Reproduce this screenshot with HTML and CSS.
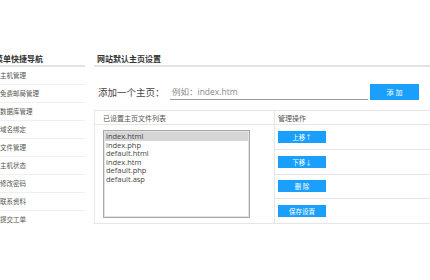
FILE: index.html
```html
<!DOCTYPE html>
<html lang="zh-CN">
<head>
<meta charset="utf-8">
<title>网站默认主页设置</title>
<link rel="stylesheet" href="styles.css">
</head>
<body>
<div class="page">
  <aside class="side">
    <h3 class="side-title">菜单快捷导航</h3>
    <ul class="side-list">
      <li>主机管理</li>
      <li>免费邮局管理</li>
      <li>数据库管理</li>
      <li>域名绑定</li>
      <li>文件管理</li>
      <li>主机状态</li>
      <li>修改密码</li>
      <li>联系资料</li>
      <li class="last">提交工单</li>
    </ul>
  </aside>
  <main class="main">
    <h3 class="main-title">网站默认主页设置</h3>
    <div class="add-row">
      <label class="add-label" for="home">添加一个主页：</label>
      <input class="add-input" id="home" type="text" placeholder="例如：index.htm">
      <button class="btn btn-add" type="button">添 加</button>
    </div>
    <table class="grid">
      <tr>
        <th class="col-list">已设置主页文件列表</th>
        <th class="col-op">管理操作</th>
      </tr>
      <tr>
        <td class="list-cell" rowspan="4">
          <div class="listbox">
            <div class="opt selected">index.html</div>
            <div class="opt">index.php</div>
            <div class="opt">default.html</div>
            <div class="opt">index.htm</div>
            <div class="opt">default.php</div>
            <div class="opt">default.asp</div>
          </div>
        </td>
        <td class="op"><button class="btn btn-op" type="button">上移↑</button></td>
      </tr>
      <tr><td class="op"><button class="btn btn-op" type="button">下移↓</button></td></tr>
      <tr><td class="op"><button class="btn btn-op" type="button">删 除</button></td></tr>
      <tr><td class="op"><button class="btn btn-op" type="button">保存设置</button></td></tr>
    </table>
  </main>
</div>
</body>
</html>
```

FILE: styles.css
```css
html, body {
  margin: 0;
  padding: 0;
  background: #fff;
  overflow: hidden;
}
body {
  font-family: "Open Sans", "Noto Sans CJK SC", sans-serif;
  color: #444;
}
.page {
  display: flex;
  gap: 9px;
  padding-top: 52px;
  margin-left: -5px;
}
.side {
  width: 90px;
  flex: none;
}
.side-title,
.main-title {
  margin: 0;
  height: 13px;
  line-height: 13px;
  font-size: 8px;
  font-weight: bold;
  color: #333;
  border-bottom: 2px solid #e3e3e3;
}
.side-list {
  list-style: none;
  margin: 0;
  padding: 0;
}
.side-list li {
  height: 17px;
  line-height: 17px;
  font-size: 6.5px;
  color: #555;
  padding-left: 5px;
  border-bottom: 1px solid #efefef;
}
.side-list li.last {
  border-bottom: none;
}
.main {
  width: 345px;
  flex: none;
}
.main-title {
  padding-left: 3px;
}
.add-row {
  display: flex;
  align-items: center;
  height: 16px;
  margin-top: 17px;
  padding-left: 4px;
}
.add-label {
  width: 72px;
  flex: none;
  font-size: 9.5px;
  color: #444;
  white-space: nowrap;
}
.add-input {
  width: 198px;
  height: 15px;
  box-sizing: border-box;
  border: none;
  border-bottom: 1px solid #999;
  padding: 0 2px;
  font-family: "Open Sans", "Noto Sans CJK SC", sans-serif;
  font-size: 8.5px;
  color: #444;
  outline: none;
  background: transparent;
}
.add-input::placeholder {
  color: #8a8a8a;
}
.btn {
  border: none;
  background: #1a9ffc;
  color: #fff;
  font-family: "Open Sans", "Noto Sans CJK SC", sans-serif;
  padding: 0;
  cursor: pointer;
}
.btn-add {
  width: 49px;
  height: 16px;
  margin-left: 2px;
  font-size: 7px;
}
.grid {
  margin-top: 10px;
  width: 100%;
  border-collapse: collapse;
  border: 1px solid #e6e6e6;
}
.grid th {
  height: 13px;
  font-size: 7px;
  font-weight: normal;
  color: #555;
  text-align: left;
  border: 1px solid #e6e6e6;
  padding: 0;
}
.grid th.col-list {
  width: 171px;
  padding-left: 8px;
}
.grid th.col-op {
  padding-left: 3px;
}
.list-cell {
  padding: 5px 0 5px 8px;
  vertical-align: top;
  border: 1px solid #e6e6e6;
}
.listbox {
  width: 147px;
  height: 88px;
  box-sizing: border-box;
  border: 1px solid #a9a9a9;
  box-shadow: inset 0 0 0 1px #e2e2e2;
  padding: 1px;
}
.opt {
  height: 8.6px;
  line-height: 8.6px;
  font-size: 7.5px;
  color: #444;
  padding-left: 1px;
  white-space: nowrap;
}
.opt.selected {
  background: #d5d5d5;
}
.op {
  height: 23.5px;
  padding: 0 0 0 3px;
  border: 1px solid #e6e6e6;
  vertical-align: middle;
}
.btn-op {
  display: block;
  width: 48px;
  height: 12px;
  font-size: 6.5px;
}
```
